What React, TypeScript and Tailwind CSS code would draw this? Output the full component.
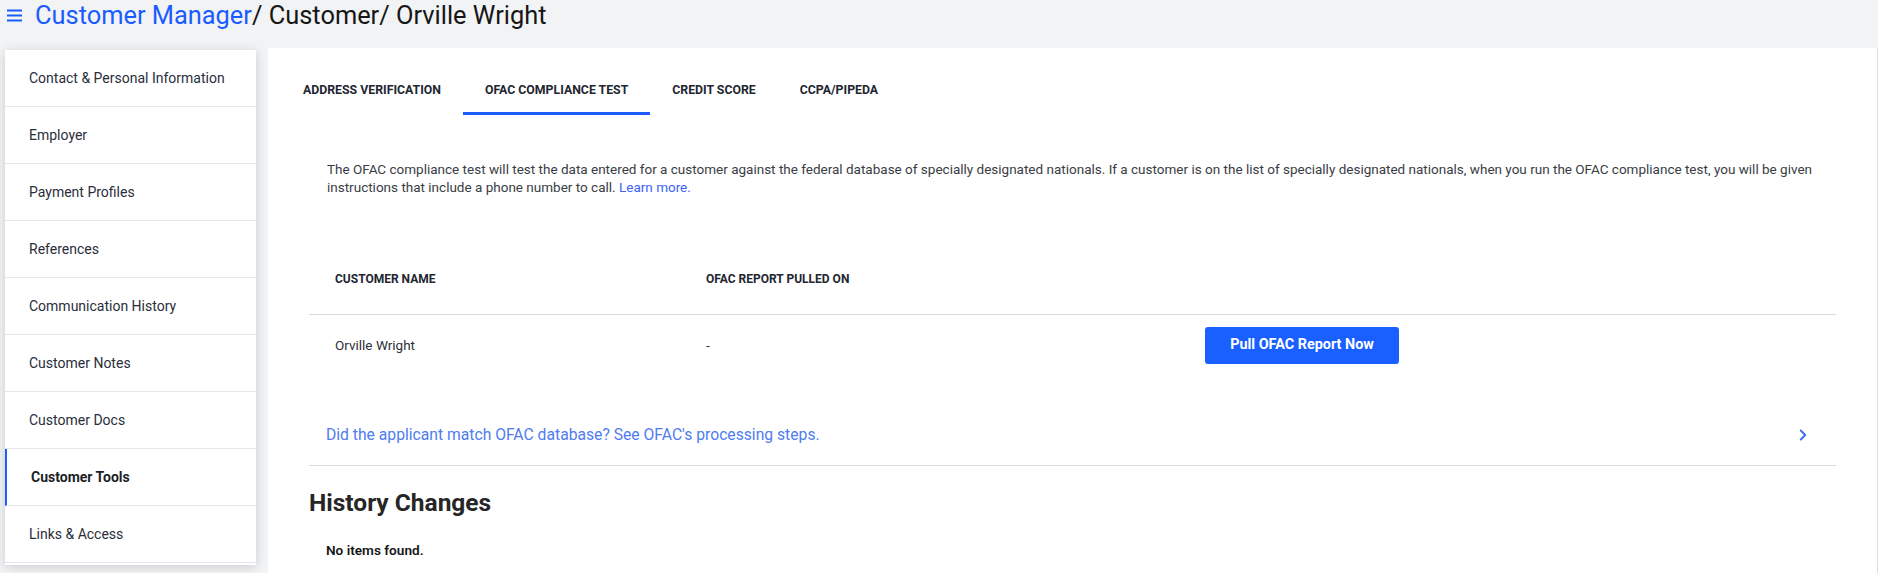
import React from 'react';
import { ChevronRight } from 'lucide-react';

const sections = [
  'Contact & Personal Information',
  'Employer',
  'Payment Profiles',
  'References',
  'Communication History',
  'Customer Notes',
  'Customer Docs',
  'Customer Tools',
  'Links & Access',
];

const tabs = ['ADDRESS VERIFICATION', 'OFAC COMPLIANCE TEST', 'CREDIT SCORE', 'CCPA/PIPEDA'];

export default function App() {
  const activeSection = 'Customer Tools';
  const activeTab = 'OFAC COMPLIANCE TEST';

  return (
    <div className="h-[573px] overflow-hidden bg-[#f2f3f5] font-['Roboto',sans-serif] text-[#262a33]">
      {/* Breadcrumb header */}
      <div className="flex h-[30px] items-center pl-[7px]">
        <svg width="15" height="13" viewBox="0 0 15 13" className="mr-[13px] text-[#1a5cff]">
          <rect x="0" y="0.5" width="15" height="2" fill="currentColor" />
          <rect x="0" y="5.5" width="15" height="2" fill="currentColor" />
          <rect x="0" y="10.5" width="15" height="2" fill="currentColor" />
        </svg>
        <h1 className="text-[25.4px] leading-[30px] text-[#161616]">
          <span className="text-[#1a5cff]">Customer Manager</span>/ Customer/ Orville Wright
        </h1>
      </div>

      <div className="flex pt-[18px]">
        {/* Left nav */}
        <nav className="ml-[5px] mt-[2px] w-[251px] self-start bg-white pb-[2px] shadow-[0_2px_10px_rgba(0,0,0,0.16)]">
          {sections.map(s => (
            <div
              key={s}
              className={`flex h-[57px] items-center border-b border-[#e4e6eb] text-[14px] ${
                s === activeSection
                  ? 'border-l-2 border-l-[#1a5cff] pl-[24px] font-bold text-[#1c1f27]'
                  : 'pl-[24px] text-[#2a2e3a]'
              }`}
            >
              {s}
            </div>
          ))}
        </nav>

        {/* Main card */}
        <main className="ml-[12px] h-[525px] flex-1 border-r border-[#dcdde0] bg-white">
          <div className="flex pl-[13px] pt-[17px]">
            {tabs.map(t => (
              <div
                key={t}
                className={`flex h-[50px] items-center px-[22px] text-[12.3px] font-bold text-[#222630] ${
                  t === activeTab ? 'border-b-[3px] border-[#1a5cff] pt-[3px]' : ''
                }`}
              >
                {t}
              </div>
            ))}
          </div>

          <div className="px-[41px]">
            <p className="mt-[46px] px-[18px] text-[13.5px] leading-[17.5px] text-[#3a3d44]">
              The OFAC compliance test will test the data entered for a customer against the federal database of specially designated nationals. If a customer is on the list of specially designated nationals, when you run the OFAC compliance test, you will be given instructions that include a phone number to call.{' '}
              <a className="text-[#3d63f5]">Learn more.</a>
            </p>

            {/* OFAC table */}
            <div className="mt-[47px]">
              <div className="flex h-[72px] items-center border-b border-[#dadada] text-[12px] font-bold text-[#222630]">
                <div className="w-[371px] pl-[26px]">CUSTOMER NAME</div>
                <div className="w-[499px] pl-[26px]">OFAC REPORT PULLED ON</div>
              </div>
              <div className="flex h-[60px] items-center text-[13.5px] text-[#2d3038]">
                <div className="w-[371px] pl-[26px]">Orville Wright</div>
                <div className="w-[499px] pl-[26px]">-</div>
                <div className="pl-[26px]">
                  <button className="h-[37px] w-[194px] rounded-[3px] bg-[#1a5fff] text-[14.4px] font-bold text-white">
                    Pull OFAC Report Now
                  </button>
                </div>
              </div>
            </div>

            <div className="mt-[29px] flex h-[62px] items-center justify-between border-b border-[#dadada] pl-[17px] pr-[24px]">
              <span className="text-[15.7px] text-[#4f7cf0]">
                Did the applicant match OFAC database? See OFAC's processing steps.
              </span>
              <ChevronRight size={18} strokeWidth={2.6} className="text-[#3a74e8]" />
            </div>

            <h2 className="mt-[22px] text-[24.5px] font-bold leading-[30px] text-[#262626]">History Changes</h2>
            <p className="mt-[22px] pl-[17px] text-[13.6px] font-semibold text-[#161616]">No items found.</p>
          </div>
        </main>
      </div>
    </div>
  );
}
